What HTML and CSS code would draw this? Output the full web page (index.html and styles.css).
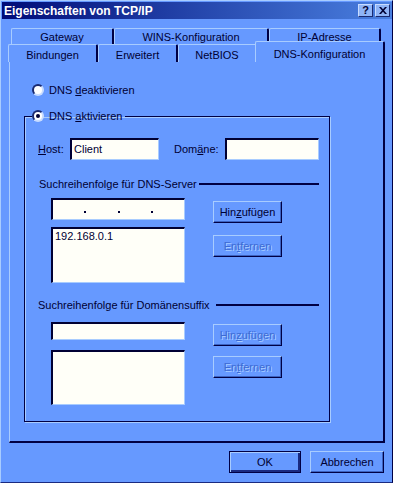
FILE: index.html
```html
<!DOCTYPE html>
<html lang="de">
<head>
    <meta charset="UTF-8">
    <meta name="viewport" content="width=device-width, initial-scale=1.0">
    <title>Eigenschaften von TCP/IP</title>
    <link rel="stylesheet" href="styles.css">
</head>
<body>
    <div class="window">
        <div class="titlebar">
            <span class="title">Eigenschaften von TCP/IP</span>
            <div class="title-buttons">
                <span class="tbtn">?</span>
                <span class="tbtn">
                    <svg width="8" height="7" viewBox="0 0 8 7"><path d="M0 0h2l2 2.2L6 0h2L5 3.5 8 7H6L4 4.8 2 7H0l3-3.5z" fill="#000033"/></svg>
                </span>
            </div>
        </div>

        <!-- Registerkarten -->
        <div class="tabs">
            <div class="tab-row back">
                <div class="tab tab-gateway">Gateway</div>
                <div class="tab tab-wins">WINS-Konfiguration</div>
                <div class="tab tab-ip">IP-Adresse</div>
            </div>
            <div class="tab-row front">
                <div class="tab tab-bind">Bindungen</div>
                <div class="tab tab-ext">Erweitert</div>
                <div class="tab tab-netbios">NetBIOS</div>
                <div class="tab tab-dns active">DNS-Konfiguration</div>
            </div>
        </div>

        <section class="panel">
            <div class="radio-row">
                <span class="radio"></span>
                <span>DNS <u>d</u>eaktivieren</span>
            </div>

            <fieldset class="group">
                <legend class="radio-row legend">
                    <span class="radio checked"></span>
                    <span>DNS <u>a</u>ktivieren</span>
                </legend>
                <div class="group-body">
                    <div class="host-row">
                        <label class="label-host"><u>H</u>ost:</label>
                        <div class="field host">Client</div>
                        <label class="label-domain">Dom<u>ä</u>ne:</label>
                        <div class="field domain"></div>
                    </div>

                    <div class="section-head">Suchreihenfolge für DNS-Server</div>
                    <div class="section dns">
                        <div class="col">
                            <div class="field ip">
                                <span class="octet"></span><span class="dot"></span>
                                <span class="octet"></span><span class="dot"></span>
                                <span class="octet"></span><span class="dot"></span>
                                <span class="octet"></span>
                            </div>
                            <div class="field list list-dns">192.168.0.1</div>
                        </div>
                        <div class="btn-col">
                            <button class="btn">Hin<u>z</u>ufügen</button>
                            <button class="btn" disabled>En<u>t</u>fernen</button>
                        </div>
                    </div>

                    <div class="section-head domain-head">Suchreihenfolge für Domänensuffix</div>
                    <div class="section suffix">
                        <div class="col">
                            <div class="field small"></div>
                            <div class="field list list-suffix"></div>
                        </div>
                        <div class="btn-col">
                            <button class="btn" disabled>Hin<u>z</u>ufügen</button>
                            <button class="btn" disabled>En<u>t</u>fernen</button>
                        </div>
                    </div>
                </div>
            </fieldset>
        </section>

        <div class="footer">
            <button class="btn btn-ok">OK</button>
            <button class="btn btn-cancel">Abbrechen</button>
        </div>
    </div>
</body>
</html>
```

FILE: styles.css
```css
* {
    box-sizing: border-box;
}

body {
    margin: 0;
    background-color: #6699ff;
    font-family: "Liberation Sans", Arial, sans-serif;
    font-size: 11px;
    color: #000033;
}

u {
    text-decoration-thickness: 1px;
    text-underline-offset: 1px;
}

.window {
    width: 393px;
    height: 483px;
    padding: 1px 0 0 1px;
    background-color: #6699ff;
    border-left: 1px solid #a8ccff;
    border-top: 1px solid #a8ccff;
    border-right: 1px solid #000044;
    border-bottom: 1px solid #1a2a80;
}

.titlebar {
    height: 17px;
    display: flex;
    align-items: center;
    justify-content: space-between;
    padding: 0 2px 0 2px;
    background: linear-gradient(90deg, #000c78, #4a80e0);
}

.title {
    color: #ffffff;
    font-weight: bold;
    font-size: 12px;
}

.title-buttons {
    display: flex;
    gap: 2px;
}

.tbtn {
    width: 15px;
    height: 13px;
    display: flex;
    align-items: center;
    justify-content: center;
    background-color: #8fb4f6;
    border-top: 1px solid #c8dcff;
    border-left: 1px solid #c8dcff;
    border-right: 1px solid #1a2a70;
    border-bottom: 1px solid #1a2a70;
    font-weight: bold;
    font-size: 11px;
    line-height: 11px;
}

/* Registerkarten */
.tabs {
    margin-top: 9px;
}

.tab-row {
    display: flex;
}

.tab-row.back {
    margin-left: 9px;
    height: 16px;
}

.tab-row.front {
    margin-left: 6px;
    height: 18px;
    align-items: flex-end;
    margin-bottom: -1px;
}

.tab {
    height: 100%;
    text-align: center;
    line-height: 16px;
    background-color: #6699ff;
    border-top: 1px solid #a8ccff;
    border-left: 1px solid #a8ccff;
    border-right: 2px solid #000044;
    border-radius: 2px 2px 0 0;
}

.front .tab {
    line-height: 21px;
}

.tab-gateway { width: 103px; }
.tab-wins { width: 155px; }
.tab-ip { width: 112px; }
.tab-bind { width: 90px; }
.tab-ext { width: 80px; }
.tab-netbios { width: 79px; }

.front .tab.active {
    width: 130px;
    height: 21px;
    margin-left: -2px;
    line-height: 24px;
    position: relative;
    z-index: 1;
}

.panel {
    margin: 0 7px;
    height: 382px;
    padding-top: 21px;
    border-top: 1px solid #a8ccff;
    border-left: 1px solid #a8ccff;
    border-right: 2px solid #000044;
    border-bottom: 2px solid #000044;
}

.radio-row {
    display: flex;
    align-items: center;
    gap: 5px;
    height: 14px;
    margin-left: 22px;
}

.radio {
    width: 12px;
    height: 12px;
    border-radius: 50%;
    background-color: #ffffff;
    border: 2px solid;
    border-color: #1a2a70 #c8dcff #c8dcff #1a2a70;
    position: relative;
}

.radio.checked::after {
    content: "";
    position: absolute;
    left: 2px;
    top: 2px;
    width: 4px;
    height: 4px;
    border-radius: 50%;
    background-color: #000033;
}

.group {
    width: 306px;
    margin: 12px 0 0 14px;
    padding: 0;
    border: 1px solid #000044;
    box-shadow: inset 1px 1px 0 #a8ccff, 1px 1px 0 #a8ccff;
}

.legend {
    margin-left: 7px;
    padding: 0 3px 0 0;
}

.group-body {
    padding: 15px 10px 16px 13px;
}

.field {
    background-color: #fffff8;
    border-top: 2px solid #000033;
    border-left: 2px solid #000033;
    border-right: 1px solid #a8ccff;
    border-bottom: 1px solid #a8ccff;
    padding: 1px 2px;
    line-height: 14px;
}

.host-row {
    display: flex;
    align-items: center;
    height: 22px;
}

.label-host {
    width: 32px;
}

.label-domain {
    width: 51px;
    margin-left: 15px;
}

.host,
.domain {
    height: 22px;
    padding-top: 2px;
}

.host {
    width: 89px;
}

.domain {
    width: 94px;
}

.section-head {
    display: flex;
    align-items: center;
    height: 14px;
    margin-top: 17px;
    padding-left: 1px;
}

.section-head::after {
    content: "";
    flex: 1;
    height: 2px;
    margin-left: 2px;
    background-color: #000044;
}

.domain-head {
    margin-top: 15px;
    padding-left: 0;
}

.domain-head::after {
    margin-left: 6px;
}

.section {
    display: flex;
    gap: 28px;
    margin-left: 13px;
}

.col {
    width: 134px;
    display: flex;
    flex-direction: column;
}

.dns .col {
    margin-top: 7px;
    gap: 7px;
}

.suffix .col {
    margin-top: 10px;
    gap: 10px;
}

.ip {
    height: 22px;
    display: flex;
    align-items: center;
    padding: 0;
}

.octet {
    flex: 1;
}

.dot {
    width: 2px;
    height: 2px;
    margin-top: 4px;
    background-color: #000033;
}

.list-dns {
    height: 56px;
    padding: 0 2px;
}

.small {
    height: 18px;
}

.list-suffix {
    height: 55px;
}

.btn-col {
    display: flex;
    flex-direction: column;
}

.dns .btn-col {
    margin-top: 10px;
    gap: 12px;
}

.suffix .btn-col {
    margin-top: 12px;
    gap: 10px;
}

.btn {
    width: 69px;
    height: 22px;
    padding: 0;
    font-family: inherit;
    font-size: 11px;
    color: #000033;
    background-color: #6699ff;
    border: 1px solid;
    border-color: #a8ccff #000044 #000044 #a8ccff;
    box-shadow: inset -1px -1px 0 #3c62c0;
}

.btn:disabled {
    color: #3d6ad4;
    text-shadow: 1px 1px 0 #a8ccff;
}

.footer {
    display: flex;
    justify-content: flex-end;
    gap: 9px;
    margin-top: 8px;
    padding-right: 8px;
}

.btn-ok {
    width: 72px;
    border: 1px solid #000044;
    box-shadow: inset 1px 1px 0 #a8ccff, inset -2px -2px 0 #1a2a80;
}

.btn-cancel {
    width: 74px;
}
```
